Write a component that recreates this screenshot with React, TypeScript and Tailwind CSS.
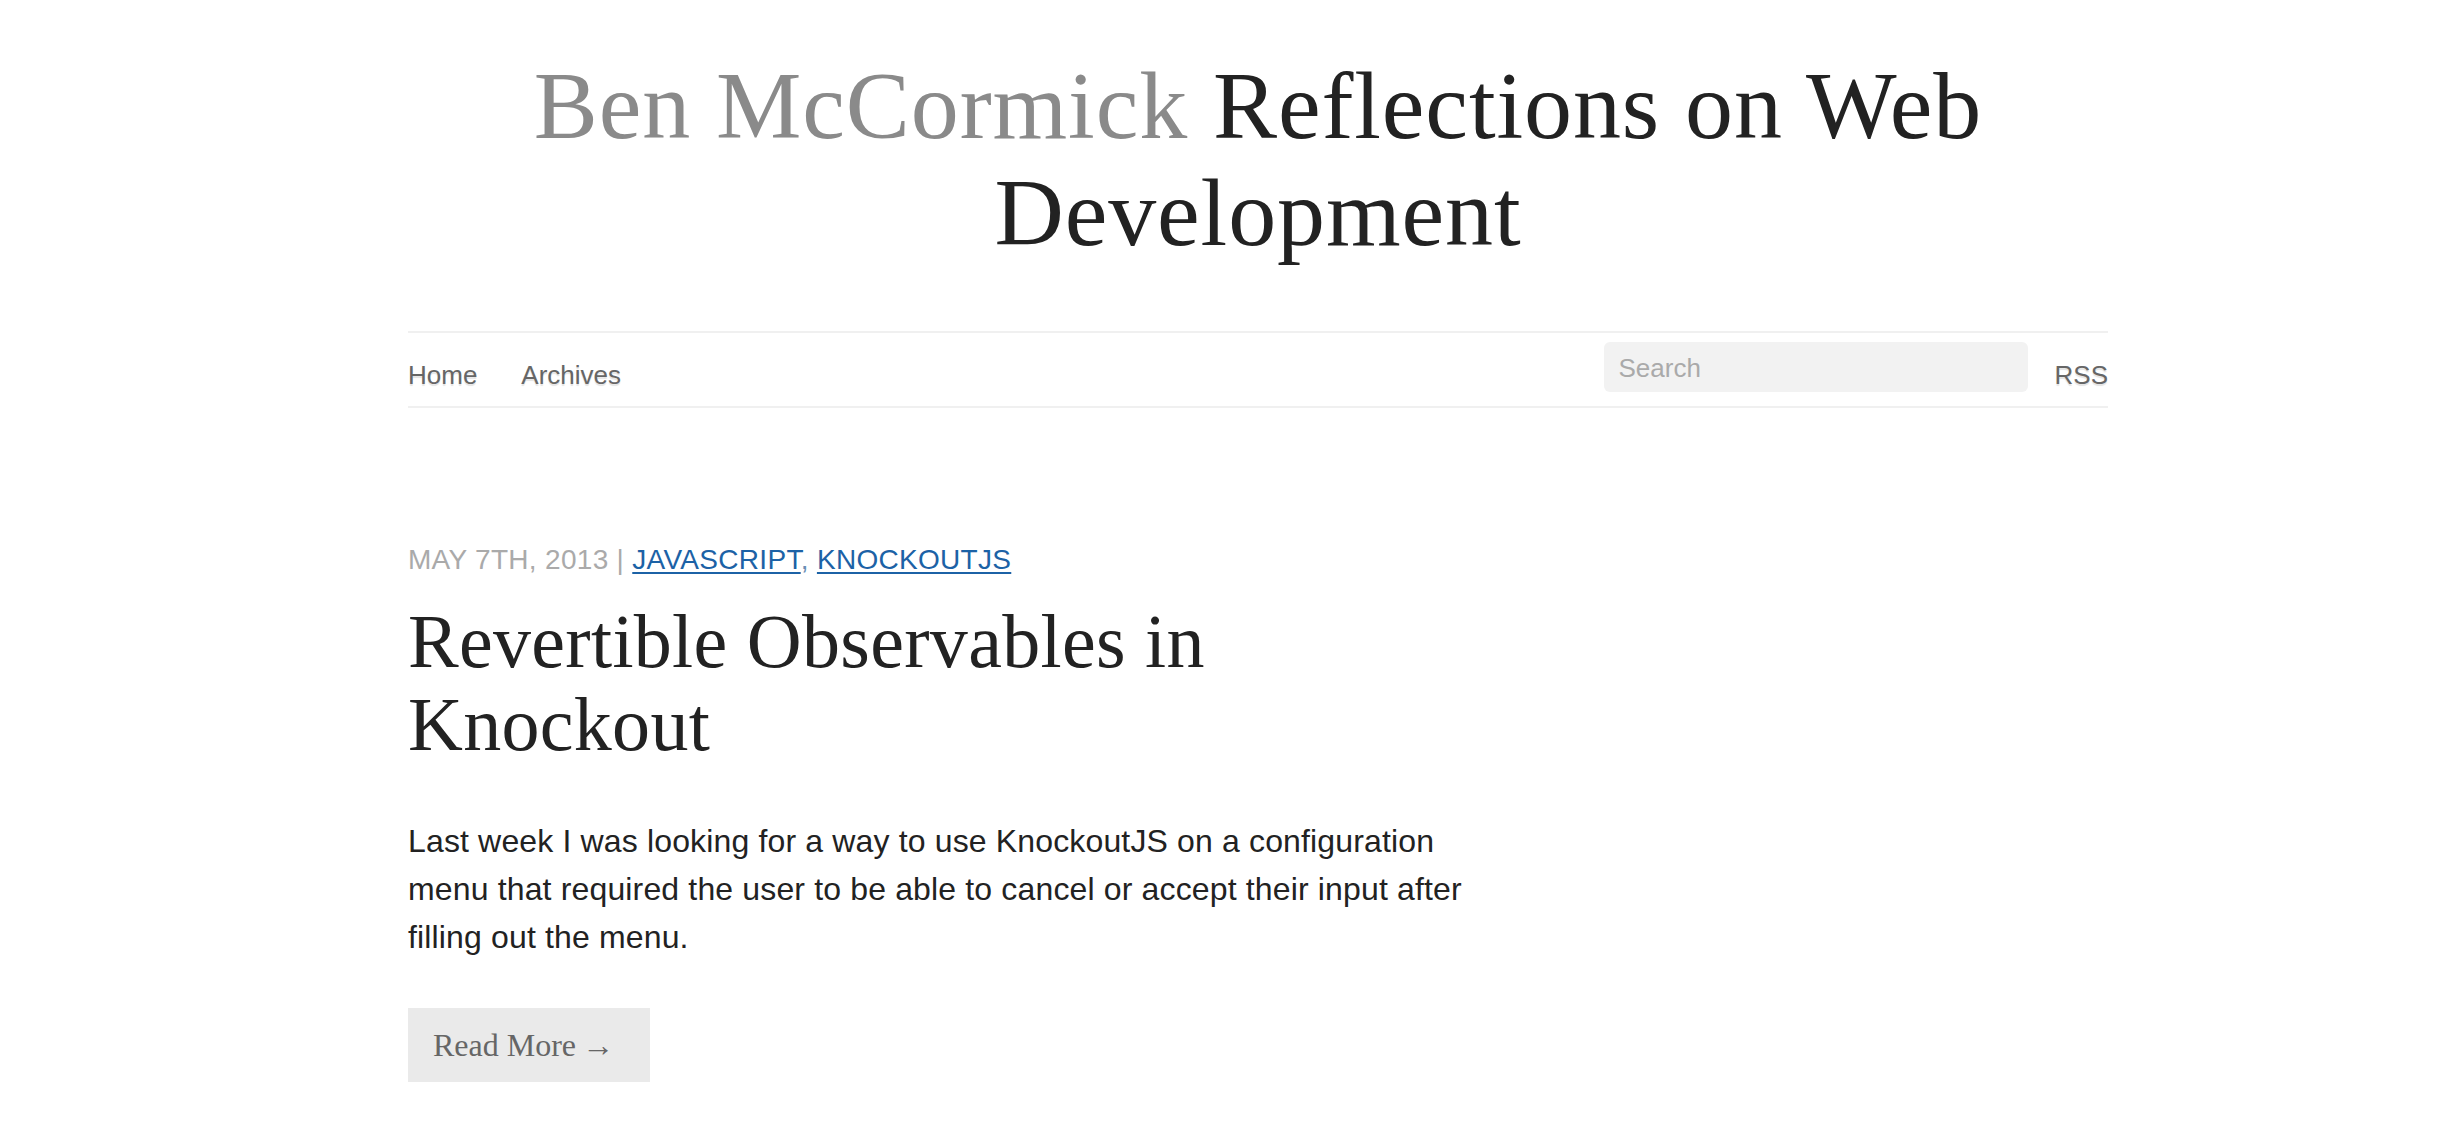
import React from "react";

const sans = "font-['Liberation_Sans',Arial,sans-serif]";
const serif = "font-['Liberation_Serif','Times_New_Roman',serif]";

export default function App() {
  return (
    <div className="min-h-[1142px] bg-white">
      <div className="ml-[408px] w-[1700px]">
        <header className="pt-[52px]">
          <h1
            className={`${serif} text-center text-[96px] leading-[107px] tracking-[0.9px] font-normal text-[#222222]`}
          >
            <span className="text-[#8a8a8a]">Ben McCormick</span> Reflections on Web Development
          </h1>
        </header>

        <nav className="mt-[65px] flex h-[77px] items-start justify-between border-y-2 border-[#f0f0f0]">
          <ul className={`${sans} flex gap-[44px] pt-[27px] text-[26px] leading-[30px] text-[#666666] [text-shadow:0_2px_1px_#e4e4e4]`}>
            <li>Home</li>
            <li>Archives</li>
          </ul>
          <div className="flex items-start">
            <input
              type="text"
              placeholder="Search"
              className={`${sans} mt-[9px] h-[50px] w-[424px] rounded-[6px] bg-[#f2f2f2] pl-[15px] pt-[2px] text-[26px] text-[#444] outline-none placeholder:text-[#aaaaaa]`}
            />
            <span
              className={`${sans} ml-[27px] pt-[27px] text-[26px] leading-[30px] text-[#666666] [text-shadow:0_2px_1px_#e4e4e4]`}
            >
              RSS
            </span>
          </div>
        </nav>

        <article className="mt-[132px] w-[1080px]">
          <div className={`${sans} text-[28px] leading-[40px] tracking-[0.3px] text-[#aaaaaa]`}>
            MAY 7TH, 2013 |{" "}
            <a className="text-[#1c62a6] underline decoration-[2px] underline-offset-[3px]">JAVASCRIPT</a>
            <span className="text-[#6a8fb5]">,</span>{" "}
            <a className="text-[#1c62a6] underline decoration-[2px] underline-offset-[3px]">KNOCKOUTJS</a>
          </div>
          <h2 className={`${serif} mt-[20px] text-[76px] leading-[83px] tracking-[0.3px] font-normal text-[#222222]`}>
            Revertible Observables in Knockout
          </h2>
          <p className={`${sans} mt-[51px] text-[32px] leading-[48px] tracking-[0.15px] text-[#222222]`}>
            Last week I was looking for a way to use KnockoutJS on a configuration menu that required the user to be
            able to cancel or accept their input after filling out the menu.
          </p>
          <div className="mt-[47px]">
            <a
              className={`${serif} block h-[74px] w-[242px] bg-[#eaeaea] pl-[25px] pt-[17px] text-[32px] leading-[40px] text-[#666666]`}
            >
              Read More<span className="ml-[6px]">→</span>
            </a>
          </div>
        </article>
      </div>
    </div>
  );
}
